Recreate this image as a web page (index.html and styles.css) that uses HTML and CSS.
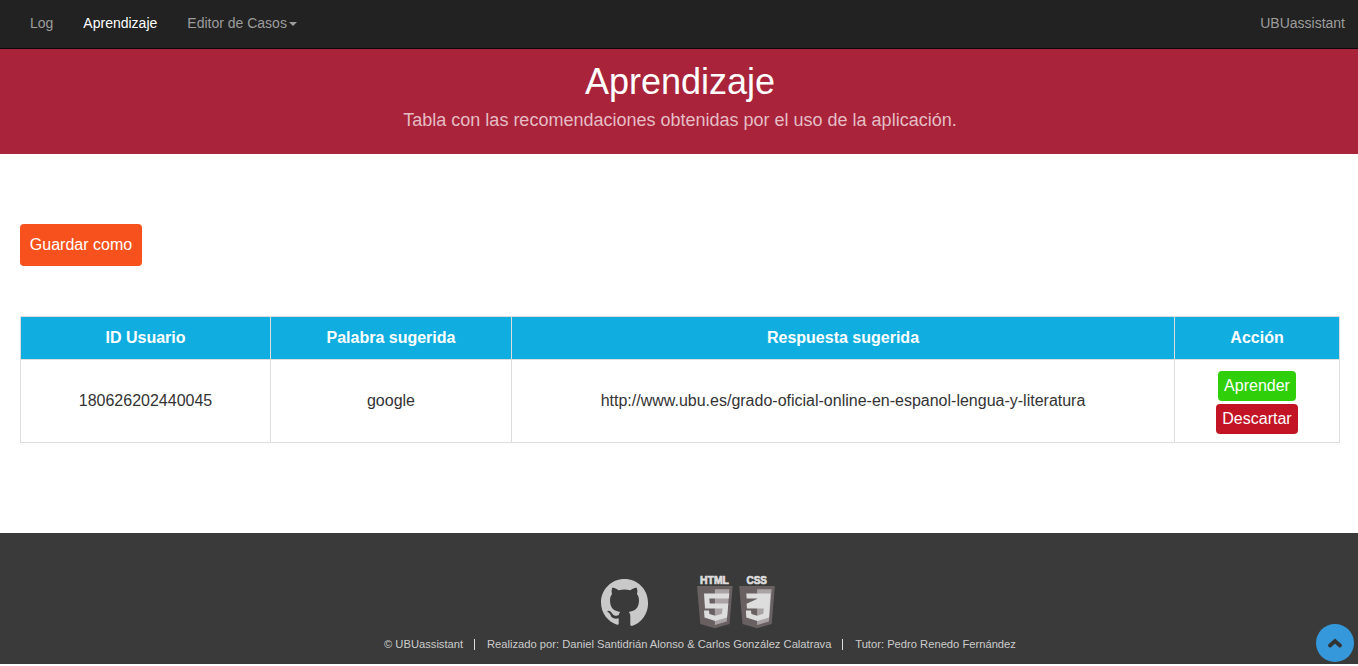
FILE: index.html
```html
<!DOCTYPE html>
<html lang="es">
<head>
<meta charset="utf-8">
<title>UBUassistant</title>
<link rel="stylesheet" href="styles.css">
</head>
<body>
<nav class="navbar">
  <a class="nav-link">Log</a>
  <a class="nav-link active">Aprendizaje</a>
  <a class="nav-link">Editor de Casos<span class="caret"></span></a>
  <a class="nav-link brand">UBUassistant</a>
</nav>
<header class="banner">
  <h1 class="banner-title">Aprendizaje</h1>
  <p class="banner-text">Tabla con las recomendaciones obtenidas por el uso de la aplicación.</p>
</header>
<main class="content">
  <button class="btn save">Guardar como</button>
  <table class="table">
    <colgroup><col class="c-id"><col class="c-word"><col class="c-answer"><col class="c-action"></colgroup>
    <thead><tr><th>ID Usuario</th><th>Palabra sugerida</th><th>Respuesta sugerida</th><th>Acción</th></tr></thead>
    <tbody><tr>
      <td>180626202440045</td><td>google</td>
      <td>http://www.ubu.es/grado-oficial-online-en-espanol-lengua-y-literatura</td>
      <td><div class="actions"><button class="btn small learn">Aprender</button><button class="btn small discard">Descartar</button></div></td>
    </tr></tbody>
  </table>
</main>
<footer class="footer">
  <div class="logos">
    <svg class="github" viewBox="0 0 16 16"><path fill="#c9c9c9" d="M8 0C3.580 0 0 3.580 0 8c0 3.540 2.290 6.530 5.470 7.590.200.030.550-.100.550-.380V13.400c-2.010.370-2.530-.490-2.690-.940-.090-.230-.480-.940-.820-1.130-.280-.150-.680-.520-.010-.530.630-.010 1.080.580 1.230.820.720 1.210 1.870.870 2.330.660.070-.520.280-.870.510-1.070-1.780-.200-3.500-.890-3.500-3.950 0-.870.250-1.590.700-2.150-.080-.200-.360-1.020.080-2.120 0 0 .670-.210 2.200.820.640-.180 1.360-.270 1.950-.270s1.310.090 1.950.270c1.530-1.040 2.200-.820 2.200-.820.440 1.100.160 1.920.080 2.120.450.560.700 1.270.700 2.150 0 3.070-1.750 3.750-3.500 3.950.290.250.540.730.540 1.480v2.900c0 .280.350.410.550.380A8.010 8.010 0 0 0 16 8c0-4.420-3.580-8-8-8z"/></svg>
    <svg class="badges" viewBox="0 0 80 56">
      <g class="badge-label"><text x="4" y="9.500" textLength="29" lengthAdjust="spacingAndGlyphs">HTML</text><text x="50.500" y="9.500" textLength="20.500" lengthAdjust="spacingAndGlyphs">CSS</text></g>
      <g><path fill="#696062" d="M1 12h35.700L33.500 50l-14.600 4.200L4.300 50z"/><path fill="#aaa3a5" d="M18.900 15.200h14.500L30.700 47.500l-11.800 3.600z"/><path fill="#ddd" d="M8 19.500H33.300L32.800 24.500H13.300L13.700 29.500H32.300L31 43.500L19.300 47L8.500 43.500L8 36.500H13L13.400 40L19.300 41.800L26 39.800L26.500 34.500H9z"/></g>
      <g><path fill="#696062" d="M43.200 12h35.700L75.700 50l-14.600 4.200L46.500 50z"/><path fill="#aaa3a5" d="M61.100 15.200h14.500L72.900 47.500l-11.800 3.600z"/><path fill="#ddd" d="M50.300 19.500H74.500L73 43.500L61.500 47L50.300 43.500L49.900 36.500H55L55.400 40L61.300 41.800L67.300 39.800L67.800 34.500H51L50.600 29.700L62 24.500H50.700z"/></g>
    </svg>
  </div>
  <div class="credits"><span>© UBUassistant</span><span>Realizado por: Daniel Santidrián Alonso &amp; Carlos González Calatrava</span><span>Tutor: Pedro Renedo Fernández</span></div>
</footer>
<a class="to-top"><svg viewBox="0 0 38 38"><path d="M14 21.500l5-4.500 5 4.500" fill="none" stroke="#333" stroke-width="3.800" stroke-linecap="round"/></svg></a>
</body>
</html>
```
FILE: styles.css
```css
* { box-sizing: border-box; }
body { margin: 0; height: 666px; overflow: hidden; background: #fff; color: #333; font: 16px/22px "Liberation Sans", Arial, sans-serif; }
.navbar { display: flex; height: 49px; padding: 13px 13px 0 30px; gap: 30px; background: #222; border-bottom: 1px solid #080808; font-size: 14px; line-height: 20px; }
.nav-link { color: #9d9d9d; }
.active { color: #fff; }
.brand { margin-left: auto; }
.caret { display: inline-block; margin-left: 2px; vertical-align: middle; border-top: 4px solid #9d9d9d; border-left: 4px solid transparent; border-right: 4px solid transparent; }
.banner { height: 105px; padding: 13px 0 0 2px; background: #a9233b; text-align: center; }
.banner-title { margin: 0; color: #fff; font-size: 36px; font-weight: 400; line-height: 40px; }
.banner-text { margin: 6px 0 0; color: #e5bdc4; font-size: 18px; line-height: 25px; }
.content { height: 379px; padding: 70px 18px 0 20px; }
.btn { display: block; border: 0; border-radius: 4px; color: #fff; font: 16px/22px "Liberation Sans", Arial, sans-serif; }
.save { width: 122px; height: 42px; padding: 0; background: #f7511d; }
.table { width: 1320px; margin-top: 50px; border-collapse: collapse; table-layout: fixed; text-align: center; }
.c-id { width: 250px; }
.c-word { width: 241px; }
.c-answer { width: 663px; }
.c-action { width: 165px; }
.table th, .table td { padding: 0; border: 1px solid #ddd; }
.table th { height: 43px; background: #10aee0; color: #fff; }
.table td { height: 83px; }
.actions { display: flex; flex-direction: column; align-items: center; gap: 3px; padding-top: 3px; }
.small { height: 30px; padding: 0 6px; }
.learn { background: #2fd00a; }
.discard { background: #c31425; }
.footer { height: 131px; padding-top: 41px; background: #3a3a3a; }
.logos { display: flex; height: 56px; padding-left: 600px; }
.github { width: 47px; height: 47px; margin: 5px 0 0 .5px; }
.badges { width: 80px; height: 56px; margin-left: 48.5px; }
.badge-label text { fill: #ddd; stroke: #ddd; stroke-width: .7px; font: bold 10.5px "Liberation Sans", Arial, sans-serif; }
.credits { display: flex; margin-top: 9px; padding-left: 384px; color: #ccc; font-size: 11.2px; line-height: 11px; white-space: nowrap; }
.credits span + span { margin-left: 10.8px; padding-left: 12px; border-left: 1px solid #ddd; }
.to-top { position: absolute; right: 4px; bottom: 4px; width: 38px; height: 38px; border-radius: 50%; background: #3498db; }
.to-top svg { display: block; }
```
